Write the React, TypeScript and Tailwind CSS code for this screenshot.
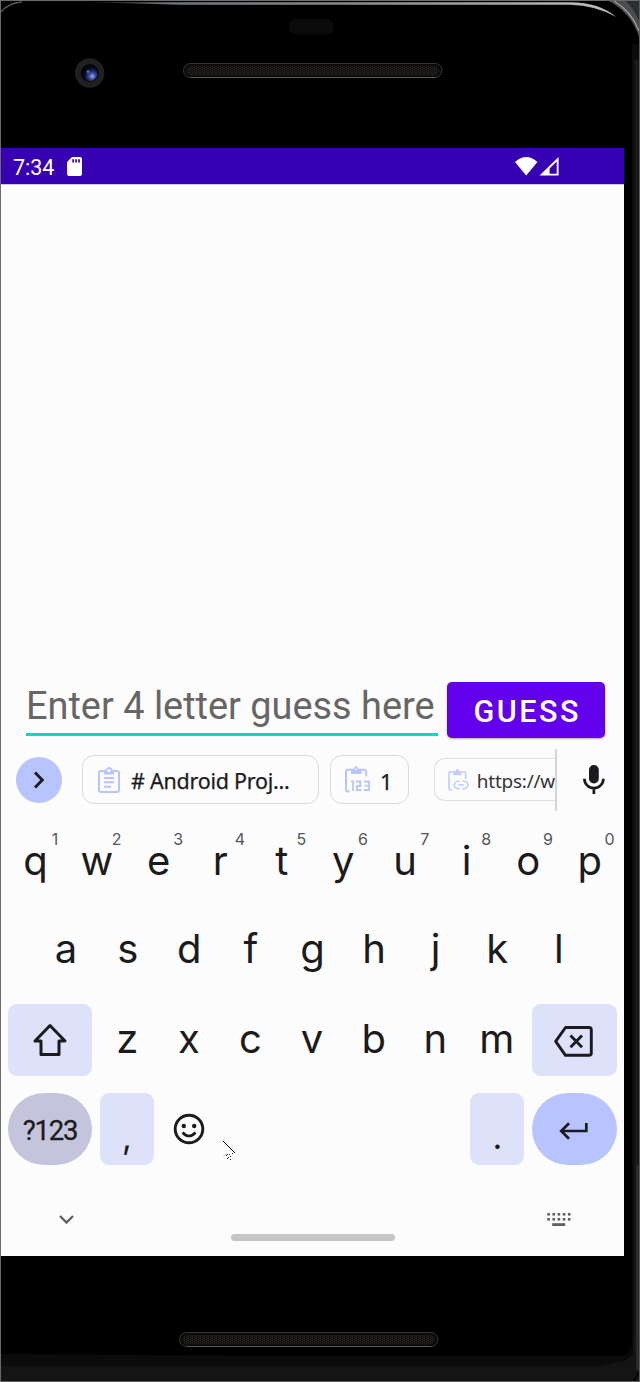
import type { ReactNode } from "react";

function Grille({ x, y }: { x: number; y: number }) {
  return (
    <g>
      <rect x={x} y={y} width="258.5" height="14" rx="7" fill="#0a0a0a" stroke="#363636" strokeWidth="1" />
      <rect x={x + 3} y={y + 2.5} width="252.5" height="9.5" rx="4.7" fill="url(#mesh)" />
      <path d={`M${x + 7} ${y + 14}H${x + 252}`} stroke="#5c5a54" strokeWidth="1" />
    </g>
  );
}

function Bezel() {
  return (
    <svg className="absolute inset-0" width="640" height="1382" viewBox="0 0 640 1382" fill="none">
      <defs>
        <pattern id="mesh" width="4" height="2" patternUnits="userSpaceOnUse">
          <rect width="4" height="2" fill="#11100e" />
          <rect x="0" y="0" width="1" height="1" fill="#2e2b25" />
          <rect x="2" y="1" width="1" height="1" fill="#2e2b25" />
          <rect x="3" y="0" width="1" height="1" fill="#1e1c18" />
        </pattern>
        <linearGradient id="topEdge" x1="60" x2="600" y1="0" y2="0" gradientUnits="userSpaceOnUse">
          <stop offset="0" stopColor="#000" />
          <stop offset="0.2" stopColor="#70757a" />
          <stop offset="0.5" stopColor="#85898c" />
          <stop offset="1" stopColor="#b8bcbe" />
        </linearGradient>
        <linearGradient id="side" x1="632" x2="639" y1="0" y2="0" gradientUnits="userSpaceOnUse">
          <stop offset="0" stopColor="#080808" />
          <stop offset="0.6" stopColor="#1c1c1c" />
          <stop offset="1" stopColor="#141414" />
        </linearGradient>
        <radialGradient id="lens" cx="0.65" cy="0.68" r="0.6">
          <stop offset="0" stopColor="#9fb0f0" />
          <stop offset="0.3" stopColor="#4357ac" />
          <stop offset="0.7" stopColor="#141c4a" />
          <stop offset="1" stopColor="#05060c" />
        </radialGradient>
      </defs>
      <rect width="640" height="1382" fill="#000" />
      <path d="M632 44V1340Q632 1356 618 1356H300L0 1354V1382H640V44Z" fill="#0b0b0b" />
      <path d="M634 60H639V1382H0V1366H600Q634 1366 634 1330Z" fill="url(#side)" />
      <path d="M0 1366H600L626 1360L639 1350V1382H0Z" fill="#141414" />
      <path d="M637.5 1165V1370" stroke="#333" strokeWidth="2" />
      <path d="M633 1382L639 1372" stroke="#000" strokeWidth="1.5" />
      <path d="M90 2.2H570Q600 2.500 616 17Q596 5.500 570 4.800H180Z" fill="url(#topEdge)" />
      <path d="M609 1H626Q634 8 639 20V37Q632 14 609 1Z" fill="#4a4c4e" />
      <path d="M614 1Q632 12 639 31" stroke="#a0a2a4" strokeWidth="1.2" />
      <path d="M626 1H639V20Q634 8 626 1Z" fill="#2b2e33" />
      <path d="M1 12Q8 3 22 2" stroke="#55585a" strokeWidth="1.500" />
      <path d="M0 .5H640" stroke="#6b6b6b" strokeWidth="1" />
      <path d="M639.5 0V1382M0 1381.500H640" stroke="#5c5c5c" strokeWidth="1" />
      <path d="M.5 0V1382" stroke="#6b6b6b" strokeWidth="1" />
      <rect x="289" y="19" width="45" height="15.500" rx="7.700" fill="#0b0b0b" />
      <circle cx="89.700" cy="73" r="14.700" fill="#202020" />
      <circle cx="89.700" cy="73" r="9" fill="#05060a" />
      <circle cx="90" cy="73.500" r="7.600" fill="url(#lens)" />
      <circle cx="88" cy="71.500" r="1.500" fill="#4a64c4" />
      <Grille x={183.5} y={63.5} />
      <Grille x={179.5} y={1332.5} />
    </svg>
  );
}

function StatusBar() {
  return (
    <div className="flex h-9 shrink-0 items-center bg-[#3700b3] pl-3 text-white">
      <span className="w-[54px] pt-[3px] text-[21.5px] leading-none">7:34</span>
      <svg width="15" height="19" viewBox="0 0 15 19" className="mt-[1px]">
        <path
          fillRule="evenodd"
          fill="#fff"
          d="M5 0H13Q15 0 15 2V17Q15 19 13 19H2Q0 19 0 17V5ZM5.3 2.2V5.6H7V2.2ZM8.2 2.2V5.6H9.9V2.2ZM11.2 2.2V5.6H12.9V2.2Z"
        />
      </svg>
      <svg width="44" height="19" viewBox="0 0 44 19" className="ml-[433px]">
        <path fill="#fff" d="M0 5Q11.2-5 22.4 5L11.2 18.6Z" />
        <path fill="#fff" fillRule="evenodd" d="M24.5 18.6L43.6 0V18.6ZM34.6 11.5V16.7H41.7V4.6Z" />
      </svg>
    </div>
  );
}

function GuessForm() {
  return (
    <div className="flex items-start pl-[25px]">
      <div className="mt-[2px] flex h-[52px] w-[412px] items-center whitespace-nowrap border-b-[3px] border-[#03dac5] pb-[4px] text-[37.9px] leading-none text-[#666]">
        Enter 4 letter guess here
      </div>
      <div className="ml-[9.3px] flex h-14 w-[158px] items-center justify-center rounded-[5px] bg-[#6200ee] pl-[2px] pt-[4px] text-[30.5px] font-medium leading-none tracking-[2.5px] text-white shadow-[0_1px_2px_rgba(0,0,0,0.3)]">
        GUESS
      </div>
    </div>
  );
}

function ClipText() {
  return (
    <svg width="22" height="26" viewBox="0 0 22 26" fill="none" stroke="#b8c4ff" strokeWidth="2">
      <rect x="1" y="4" width="20" height="21" rx="2" />
      <path d="M6 3H16V7.500H6Z" fill="#b8c4ff" stroke="none" />
      <circle cx="11" cy="3.600" r="2.600" strokeWidth="1.800" fill="#fcfcfc" />
      <path d="M6 11H16M6 15.300H16M6 19.700H13" />
    </svg>
  );
}

function ClipNumber() {
  return (
    <svg width="26" height="27" viewBox="0 0 26 27" fill="none" stroke="#b8c4ff" strokeWidth="2">
      <path d="M4.500 25.500H3Q1 25.500 1 23.500V5.500Q1 3.800 3 3.800H19Q21.200 3.800 21.200 5.500V10.500" />
      <path d="M6 3H9Q9.500.2 11.200.2T13.500 3H16.500V8H6Z" fill="#b8c4ff" stroke="none" />
      <circle cx="11.200" cy="3.200" r=".9" fill="#fcfcfc" stroke="none" />
      <path d="M6 15.500H8V25M11 15.500H15.300V20H12V24H16.300M19 15.500H24V24H19M20 19.700H24" strokeWidth="1.800" />
    </svg>
  );
}

function ClipLink() {
  return (
    <svg width="22" height="24" viewBox="0 0 22 24" fill="none" stroke="#c3cdff" strokeWidth="1.800">
      <path d="M4 22.500H2.800Q1 22.500 1 20.700V5Q1 3.300 2.800 3.300H17Q18.600 3.300 18.600 5V11" />
      <path d="M5.500 2.600H8Q8.300.2 9.800.2T11.700 2.600H14V7H5.500Z" fill="#c3cdff" stroke="none" />
      <path d="M12.500 13.300H10.500A3.800 3.800 0 0 0 10.500 21H12.500M15.200 13.300H17.200A3.800 3.800 0 0 1 17.200 21H15.200M11 17.150H16.700" />
    </svg>
  );
}

function Suggestions() {
  return (
    <div className="flex h-[62px] items-center pl-[15px] font-['Noto_Sans',sans-serif] text-[#1b1b1f]">
      <div className="flex size-[46px] shrink-0 items-center justify-center rounded-full bg-[#b8c4ff]">
        <svg width="12" height="18" viewBox="0 0 12 18" fill="none" stroke="#1b1b1f" strokeWidth="2.900">
          <path d="M2 1.500L9.300 9L2 16.500" />
        </svg>
      </div>
      <div className="-mt-px ml-[20px] flex h-[49px] w-[237px] shrink-0 items-center rounded-[12px] border-[1.500px] border-[#d9d9e0] pl-[15px]">
        <ClipText />
        <span className="ml-[11px] whitespace-nowrap pt-[3px] text-[21.500px] tracking-[-0.250px] [-webkit-text-stroke:0.25px_#1b1b1f]">
          # Android Proj...
        </span>
      </div>
      <div className="-mt-px ml-[11px] flex h-[49px] w-[79px] shrink-0 items-center rounded-[12px] border-[1.500px] border-[#d9d9e0] pl-[14px]">
        <ClipNumber />
        <span className="ml-[9px] pt-[3px] text-[22px] [-webkit-text-stroke:0.25px_#1b1b1f]">1</span>
      </div>
      <div className="ml-[25px] flex h-[62px] w-[123px] shrink-0 items-center border-r-2 border-[#d5d5d8]">
        <div className="-mt-px flex h-[43px] w-[121px] shrink-0 items-center rounded-l-[11px] border-[1.500px] border-r-0 border-[#dedee3] pl-[13px]">
          <ClipLink />
          <span className="ml-2 whitespace-nowrap pt-[3px] text-[18.900px] tracking-[-0.200px] text-[#333337]">https://w</span>
        </div>
      </div>
      <svg width="22" height="30" viewBox="0 0 22 30" className="ml-[26px]" fill="none">
        <rect x="6" y="0" width="9.800" height="18.500" rx="4.900" fill="#1b1b1f" />
        <path d="M1.400 13.700A9.500 9.500 0 0 0 20.400 13.700M10.900 23V29" stroke="#1b1b1f" strokeWidth="2.700" />
      </svg>
    </div>
  );
}

const TOP_ROW = ["q", "w", "e", "r", "t", "y", "u", "i", "o", "p"];
const HINTS = ["1", "2", "3", "4", "5", "6", "7", "8", "9", "0"];

function Letter({ children, hint }: { children: string; hint?: string }) {
  return (
    <div className="relative h-[72px] w-[61.600px] shrink-0 text-center text-[40px] leading-[70px]">
      {children}
      {hint && (
        <span className="absolute left-[40.500px] top-[3.500px] w-5 text-center text-[16px] leading-[18px] text-[#55555a]">
          {hint}
        </span>
      )}
    </div>
  );
}

function Tile({ className, children }: { className: string; children: ReactNode }) {
  return <div className={`flex h-[72px] shrink-0 items-center justify-center ${className}`}>{children}</div>;
}

function Keyboard() {
  return (
    <div className="flex flex-col gap-[17px] pt-[15px] font-['Inter',sans-serif] text-[#1b1b1d]">
      <div className="flex pl-[3.600px]">
        {TOP_ROW.map((k, i) => (
          <Letter key={k} hint={HINTS[i]}>
            {k}
          </Letter>
        ))}
      </div>
      <div className="-mt-px flex pb-px pl-[34.300px]">
        {["a", "s", "d", "f", "g", "h", "j", "k", "l"].map((k) => (
          <Letter key={k}>{k}</Letter>
        ))}
      </div>
      <div className="flex pl-[7px]">
        <Tile className="w-[84px] rounded-[9px] bg-[#dde1f9]">
          <svg width="36" height="34" viewBox="0 0 36 34" fill="none" stroke="#1b1b1d" strokeWidth="3" strokeLinejoin="round">
            <path d="M18 2.500L33 18H27V31.500H9V18H3Z" />
          </svg>
        </Tile>
        <div className="ml-[4.500px] flex w-[435.700px]">
          {["z", "x", "c", "v", "b", "n", "m"].map((k) => (
            <Letter key={k}>{k}</Letter>
          ))}
        </div>
        <Tile className="w-[85px] rounded-[9px] bg-[#dde1f9] pt-[2px]">
          <svg width="39" height="31" viewBox="0 0 39 31" className="-ml-[2px]" fill="none" stroke="#1b1b1d" strokeWidth="2.900" strokeLinejoin="round">
            <path d="M11.500 1.500H35Q37.300 1.500 37.300 4V27Q37.300 29.300 35 29.300H11.500L1.700 15.400Z" />
            <path d="M16.500 9.500L28 21.300M28 9.500L16.500 21.300" />
          </svg>
        </Tile>
      </div>
      <div className="flex pl-[7px]">
        <Tile className="w-[84px] rounded-[36px] bg-[#c4c5dd] pt-[3px] font-['Roboto',sans-serif] text-[27.500px] tracking-[-1.200px] [-webkit-text-stroke:0.3px_#1b1b1d]">
          ?123
        </Tile>
        <Tile className="ml-2 w-[54px] rounded-[9px] bg-[#dde1f9] pt-[15px] text-[34px]">,</Tile>
        <Tile className="w-[69px]">
          <svg width="32" height="32" viewBox="0 0 32 32" fill="none" stroke="#1b1b1d" strokeWidth="2.900">
            <circle cx="16" cy="16" r="13.800" />
            <circle cx="10.800" cy="13" r="2.200" fill="#1b1b1d" stroke="none" />
            <circle cx="21.200" cy="13" r="2.200" fill="#1b1b1d" stroke="none" />
            <path d="M9.500 19.500Q16 26.500 22.500 19.500" strokeWidth="2.600" />
          </svg>
        </Tile>
        <div className="w-[247px] shrink-0 pt-12">
          <svg width="14" height="20" viewBox="0 0 14 20" className="-ml-px" fill="none" shapeRendering="crispEdges">
            <path d="M1 0L13 12" stroke="#000" />
            <path d="M5 13h1M7 13h1M4 14h1M8 15h1M6 16h1M5 17h1M8 18h1M10 12h1" stroke="#222" />
            <path d="M1 16L5 12" stroke="#ccc" />
          </svg>
        </div>
        <Tile className="w-[54px] rounded-[9px] bg-[#dde1f9] pl-px pt-[14px] text-[34px]">.</Tile>
        <Tile className="ml-2 w-[84.500px] rounded-[36px] bg-[#b8c4ff]">
          <svg width="29" height="18" viewBox="0 0 29 18" fill="none" stroke="#1b1b1d" strokeWidth="2.700" className="-ml-px mt-[3px]">
            <path d="M27.300 1V9H2.500M10 1.200L2.200 9L10 16.800" />
          </svg>
        </Tile>
      </div>
    </div>
  );
}

function NavBar() {
  return (
    <div className="flex h-[90px] shrink-0 items-start pl-[57.500px]">
      <svg width="15" height="9" viewBox="0 0 15 9" className="mt-[50px]" fill="none" stroke="#5f6064" strokeWidth="2.400">
        <path d="M1 1L7.500 7.500L14 1" />
      </svg>
      <div className="ml-[157px] mt-[69px] h-[7px] w-[164px] rounded-full bg-[#c5c5c8]" />
      <svg width="24" height="14" viewBox="0 0 24 14" className="ml-[152.500px] mt-[48px]" fill="#5f6064">
        {[0, 1, 2, 3, 4].map((i) => (
          <g key={i}>
            <rect x={0.3 + i * 5.15} y="0" width="2.600" height="2.600" />
            <rect x={0.3 + i * 5.15} y="5" width="2.600" height="2.600" />
          </g>
        ))}
        <rect x="5.200" y="10.200" width="13" height="2.800" />
      </svg>
    </div>
  );
}

export default function App() {
  return (
    <div className="relative h-[1382px] w-[640px] overflow-hidden bg-black pl-px pt-[148px] font-['Roboto',sans-serif]">
      <Bezel />
      <main className="relative flex h-[1108px] w-[623px] flex-col overflow-hidden bg-[#fcfcfc]">
        <StatusBar />
        <div className="h-[498px] shrink-0 border-t border-[#cfc5e8]" />
        <GuessForm />
        <div className="h-[11px] shrink-0" />
        <Suggestions />
        <Keyboard />
        <NavBar />
      </main>
    </div>
  );
}
